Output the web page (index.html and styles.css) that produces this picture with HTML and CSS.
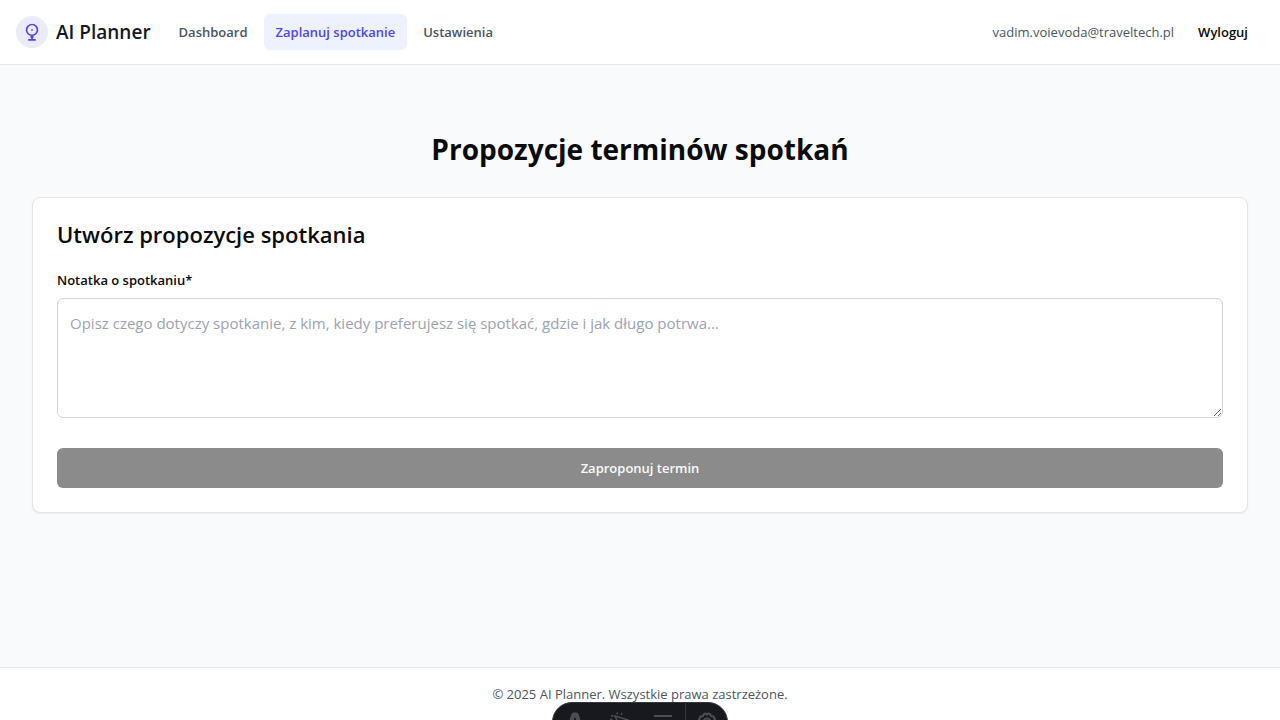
FILE: index.html
```html
<!DOCTYPE html>
<html lang="pl">
<head>
<meta charset="utf-8">
<meta name="viewport" content="width=device-width, initial-scale=1">
<title>AI Planner</title>
<link rel="stylesheet" href="styles.css">
</head>
<body>
<header class="topbar">
  <a class="brand" href="#">
    <span class="brand-mark">
      <svg width="20" height="20" viewBox="0 0 24 24" fill="none" stroke="currentColor" stroke-width="2" aria-hidden="true">
        <circle cx="12" cy="9.500" r="6.500"/>
        <circle cx="12" cy="9.500" r="1" fill="currentColor" stroke="none"/>
        <path d="M12 16v5M10 18h4M7.500 21.500h9"/>
      </svg>
    </span>
    <span class="brand-name">AI Planner</span>
  </a>
  <nav class="nav" aria-label="Menu">
    <a class="nav-link" href="#">Dashboard</a>
    <a class="nav-link nav-link-active" href="#" aria-current="page">Zaplanuj spotkanie</a>
    <a class="nav-link" href="#">Ustawienia</a>
  </nav>
  <div class="account">
    <span class="email">vadim.voievoda@traveltech.pl</span>
    <button class="logout" type="button">Wyloguj</button>
  </div>
</header>
<main class="content">
  <h1 class="page-title">Propozycje terminów spotkań</h1>
  <form class="card">
    <h2 class="card-title">Utwórz propozycje spotkania</h2>
    <label class="label" for="note">Notatka o spotkaniu*</label>
    <textarea class="note" id="note" placeholder="Opisz czego dotyczy spotkanie, z kim, kiedy preferujesz się spotkać, gdzie i jak długo potrwa..."></textarea>
    <button class="submit" type="submit" disabled>Zaproponuj termin</button>
  </form>
</main>
<footer class="footer">© 2025 AI Planner. Wszystkie prawa zastrzeżone.</footer>
<div class="devbar">
  <button class="dev-item" type="button" aria-label="Menu">
    <svg width="20" height="20" viewBox="0 0 20 20" fill="currentColor" aria-hidden="true"><path d="M6.500 2Q7 .5 8.500.5h3Q13 .5 13.500 2L18 16q-3-1.500-5-1.800L10.400 5.500h-.8L7 14.200Q5 14.500 2 16z"/></svg>
  </button>
  <button class="dev-item" type="button" aria-label="Inspect">
    <svg width="20" height="20" viewBox="0 0 20 20" fill="none" stroke="currentColor" stroke-width="1.500" aria-hidden="true"><path d="M6 4l13 4-5 2.500L11.500 16zM8.500 2.500L8 .5M12 3l1-2M4.500 4.500L2 3.500M3.500 7.500H1M5 10.500L3 12"/></svg>
  </button>
  <button class="dev-item" type="button" aria-label="Audit">
    <svg width="20" height="20" viewBox="0 0 20 20" fill="none" stroke="currentColor" stroke-width="2" aria-hidden="true"><path d="M1 4h18M1 10h10M1 16h8"/></svg>
  </button>
  <button class="dev-item dev-item-last" type="button" aria-label="Settings">
    <svg width="20" height="20" viewBox="0 0 20 20" fill="none" stroke="currentColor" stroke-width="2" aria-hidden="true"><path d="M7 2q1.500-1 3 .5Q11.500 1 13 2l1 2 2.500.5 1.500 3-1.500 2.500 1.500 2.500-1.500 3L14 16l-1 2q-1.500 1-3-.5Q8.500 19 7 18l-1-2-2.500-.5-1.500-3L3.500 10 2 7.500l1.500-3L6 4z"/><circle cx="10" cy="10" r="3.500"/></svg>
  </button>
</div>
</body>
</html>
```
FILE: styles.css
```css
*, *::before, *::after { box-sizing: border-box; }

body {
  margin: 0;
  min-height: 100vh;
  display: flex;
  flex-direction: column;
  background: #f9fafb;
  color: #0a0a0a;
  font-family: "Segoe UI", "Open Sans", "Noto Sans", sans-serif;
  font-size: 13px;
  line-height: 20px;
}

button, textarea { font-family: inherit; }

.topbar {
  display: flex;
  align-items: center;
  padding: 14px 16px;
  background: #fff;
  border-bottom: 1px solid #e5e7eb;
}

.brand {
  display: flex;
  align-items: center;
  gap: 8px;
  color: #111827;
  text-decoration: none;
}

.brand-mark {
  display: flex;
  align-items: center;
  justify-content: center;
  width: 32px;
  height: 32px;
  border-radius: 50%;
  background: #ecebfc;
  color: #4f46e5;
}

.brand-name {
  font-size: 19px;
  font-weight: 600;
  line-height: 28px;
}

.nav {
  display: flex;
  gap: 4px;
  margin-left: 16px;
}

.nav-link {
  padding: 8px 12px;
  border-radius: 6px;
  color: #4b5563;
  font-weight: 600;
  text-decoration: none;
}

.nav-link-active {
  background: #eef2ff;
  color: #4f46e5;
}

.account {
  display: flex;
  align-items: center;
  gap: 8px;
  margin-left: auto;
}

.email { color: #4b5563; }

.logout {
  padding: 8px 16px;
  border: 0;
  background: transparent;
  color: #0a0a0a;
  font-size: 13px;
  font-weight: 600;
  line-height: 20px;
}

.content {
  flex: 1;
  padding: 64px 32px;
}

.page-title {
  margin: 0 0 28px;
  font-size: 28px;
  font-weight: 700;
  line-height: 40px;
  text-align: center;
}

.card {
  display: flex;
  flex-direction: column;
  padding: 24px;
  background: #fff;
  border: 1px solid #e5e5e5;
  border-radius: 8px;
  box-shadow: 0 1px 2px rgba(0, 0, 0, 0.06);
}

.card-title {
  margin: 0 0 24px;
  font-size: 22px;
  font-weight: 600;
  line-height: 24px;
}

.label {
  margin-bottom: 8px;
  font-weight: 600;
}

.note {
  height: 120px;
  padding: 12px;
  border: 1px solid #d1d5db;
  border-radius: 6px;
  background: #fff;
  color: #0a0a0a;
  font-size: 15px;
  line-height: 24px;
  resize: vertical;
}

.note::placeholder { color: #9ca3af; }

.submit {
  margin-top: 30px;
  padding: 10px 16px;
  border: 0;
  border-radius: 6px;
  background: #8b8b8b;
  color: #fafafa;
  font-size: 13px;
  font-weight: 600;
  line-height: 20px;
}

.footer {
  padding: 16px;
  background: #fff;
  border-top: 1px solid #e5e7eb;
  color: #4b5563;
  text-align: center;
}

.devbar {
  position: fixed;
  bottom: -22px;
  left: 50%;
  display: flex;
  height: 40px;
  overflow: hidden;
  transform: translateX(-50%);
  border: 1px solid #343841;
  border-radius: 20px;
  background: #17191e;
}

.dev-item {
  display: flex;
  align-items: center;
  justify-content: center;
  width: 44px;
  padding: 0;
  border: 0;
  background: transparent;
  color: #4b4d52;
}

.dev-item-last {
  width: 42px;
  border-left: 1px solid #343841;
}
```
